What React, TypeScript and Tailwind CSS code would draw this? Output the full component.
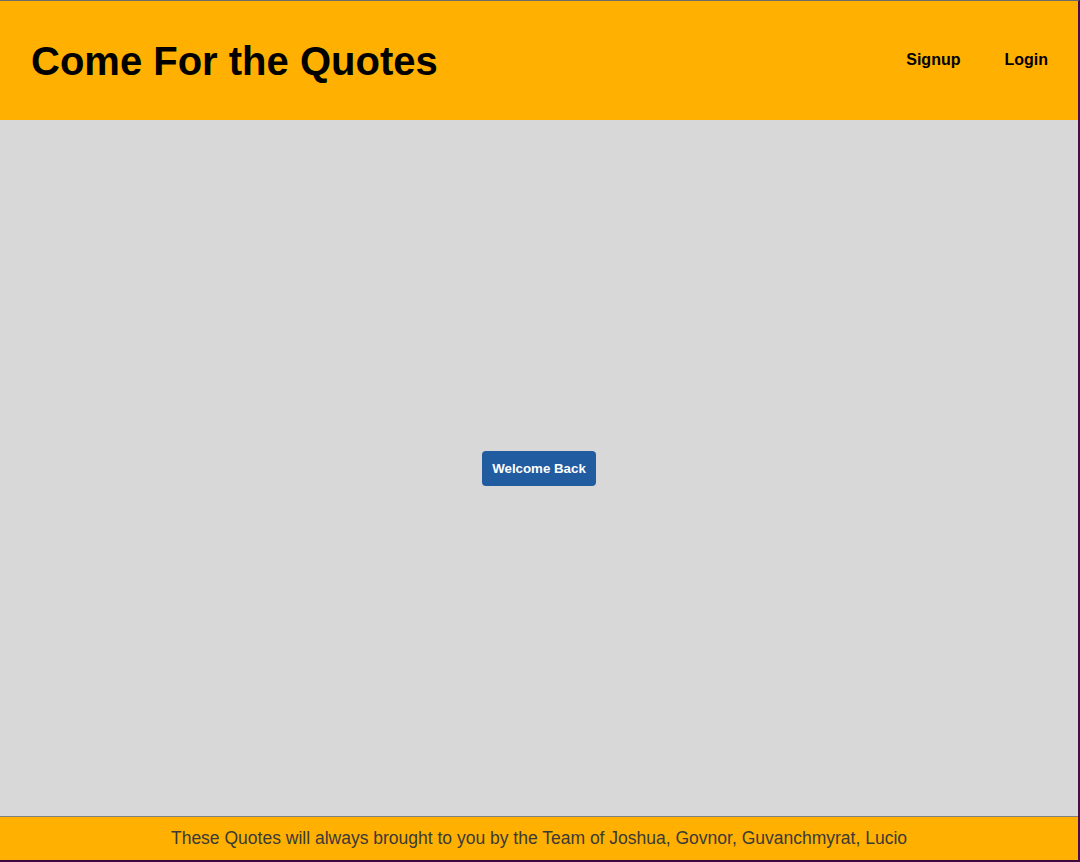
export default function App() {
  return (
    <div
      className="flex flex-col h-[862px] w-[1080px] border-t border-t-[#6b6b6b] border-r-2 border-r-[#4a0a4a] border-b-2 border-b-[#3d0640] bg-[#d8d8d8]"
      style={{ fontFamily: '"Liberation Sans", Arial, sans-serif' }}
    >
      <header className="flex items-center justify-between h-[119px] bg-[#ffb000] pl-[31px] pr-[30px]">
        <h1 className="text-[40px] font-bold text-black leading-none">Come For the Quotes</h1>
        <nav className="flex items-center gap-[44px] text-base font-bold text-black -mt-[2px]">
          <a href="#">Signup</a>
          <a href="#">Login</a>
        </nav>
      </header>

      <main className="flex-1 flex items-center justify-center">
        <button className="h-[35px] px-[10px] rounded-[4px] bg-[#215ba0] text-white text-[13.3px] font-bold mt-[1px]">
          Welcome Back
        </button>
      </main>

      <footer className="h-[44px] flex items-center justify-center bg-[#ffb000] border-t border-t-[#808080] text-[17.5px] text-[#3a3a3a]">
        These Quotes will always brought to you by the Team of Joshua, Govnor, Guvanchmyrat, Lucio
      </footer>
    </div>
  );
}
